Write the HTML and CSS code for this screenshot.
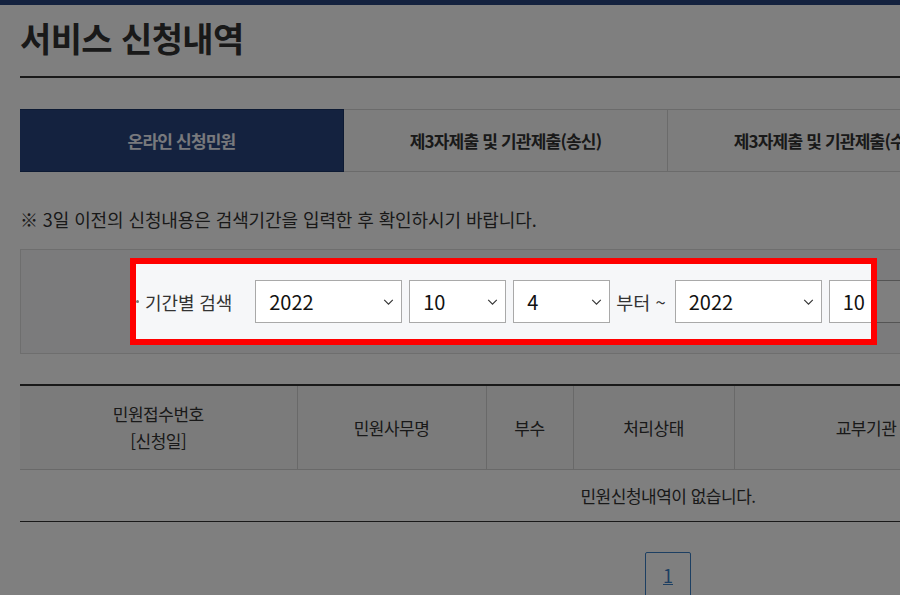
FILE: index.html
```html
<!DOCTYPE html>
<html lang="ko">
<head>
<meta charset="UTF-8">
<title>서비스 신청내역</title>
<link rel="stylesheet" href="styles.css">
</head>
<body>

<div class="topbar"></div>

<div class="wrap">
	<h1 class="title">서비스 신청내역</h1>

	<ul class="tabs">
		<li class="tab on">온라인 신청민원</li>
		<li class="tab">제3자제출 및 기관제출(송신)</li>
		<li class="tab">제3자제출 및 기관제출(수신)</li>
		<li class="tab">기관제출(수신)</li>
	</ul>

	<p class="notice">※ 3일 이전의 신청내용은 검색기간을 입력한 후 확인하시기 바랍니다.</p>

	<div class="search">
		<span class="label"><i class="dot"></i>기간별 검색</span>
		<div class="field">
			<span class="sel wide">2022<svg viewBox="0 0 12 7"><path d="M1 1l5 5 5-5"/></svg></span>
			<span class="sel">10<svg viewBox="0 0 12 7"><path d="M1 1l5 5 5-5"/></svg></span>
			<span class="sel">4<svg viewBox="0 0 12 7"><path d="M1 1l5 5 5-5"/></svg></span>
		</div>
		<span class="txt">부터 ~</span>
		<div class="field">
			<span class="sel wide">2022<svg viewBox="0 0 12 7"><path d="M1 1l5 5 5-5"/></svg></span>
			<span class="sel">10<svg viewBox="0 0 12 7"><path d="M1 1l5 5 5-5"/></svg></span>
			<span class="sel">11<svg viewBox="0 0 12 7"><path d="M1 1l5 5 5-5"/></svg></span>
		</div>
		<span class="txt">까지</span>
		<span class="btn">조회</span>
	</div>

	<table class="list">
		<tr>
			<th class="c1">민원접수번호<br>[신청일]</th>
			<th class="c2">민원사무명</th>
			<th class="c3">부수</th>
			<th class="c4">처리상태</th>
			<th class="c5">교부기관</th>
			<th>열람문서</th>
		</tr>
		<tr>
			<td colspan="6">민원신청내역이 없습니다.</td>
		</tr>
	</table>

	<div class="paging">
		<a class="page" href="#">1</a>
	</div>
</div>

<!-- focus box over the search row -->
<div class="spot"></div>

</body>
</html>
```

FILE: styles.css
```css
html, body {
    margin: 0;
    padding: 0;
}
body {
    background: white;
    font-family: "Noto Sans CJK KR", "Noto Sans", sans-serif;
    color: #333;
    overflow: hidden;
    height: 595px;
    position: relative;
}

.topbar {
    height: 5px;
    background: #28447e;
}
.wrap {
    width: 1296px;
    margin-left: 20px;
}
.title {
    margin: 13px 0 0;
    padding-bottom: 18px;
    border-bottom: 2px solid #333;
    font-size: 34px;
    line-height: 40px;
    font-weight: bold;
    letter-spacing: -0.6px;
}

.tabs {
    list-style: none;
    margin: 31px 0 0;
    padding: 0;
    display: flex;
}
.tab {
    flex: 1;
    height: 61px;
    display: flex;
    align-items: center;
    justify-content: center;
    border: 1px solid #d6d6d6;
    border-left: none;
    background: #fafafa;
    font-size: 17px;
    font-weight: bold;
    letter-spacing: -0.8px;
    color: #333;
}
.tab.on {
    background: #28447e;
    border-color: #1a3466;
    color: #f0f3fa;
}

.notice {
    margin: 35px 0 0;
    font-size: 18px;
    line-height: 24px;
    letter-spacing: -0.1px;
}

.search {
    margin-top: 18px;
    height: 103px;
    border: 1px solid #dcdcdc;
    background: #f6f7f9;
    display: flex;
    align-items: center;
    padding-left: 115px;
    white-space: nowrap;
    font-size: 18px;
}
.label {
    display: flex;
    align-items: center;
    margin-right: 23px;
    letter-spacing: -0.1px;
}
.dot {
    width: 3px;
    height: 3px;
    border-radius: 50%;
    background: #777;
    margin-right: 6px;
}
.field {
    display: flex;
    gap: 7px;
}
.txt {
    margin: 0 9px 0 6px;
    font-size: 18.5px;
}
.sel {
    width: 97px;
    height: 43px;
    box-sizing: border-box;
    border: 1px solid #a9a9a9;
    background: white;
    display: flex;
    align-items: center;
    justify-content: space-between;
    padding: 0 7px 0 13px;
    font-size: 20px;
    color: #111;
}
.sel.wide {
    width: 147px;
}
.sel svg {
    width: 11px;
    height: 6px;
    fill: none;
    stroke: #333;
    stroke-width: 1.3;
}
.btn {
    padding: 8px 24px;
    background: #28447e;
    color: white;
}

.list {
    margin-top: 30px;
    width: 100%;
    border-collapse: collapse;
    border-top: 2px solid #333;
    border-bottom: 1px solid #333;
    font-size: 17px;
    letter-spacing: -0.5px;
}
.list th {
    height: 84px;
    box-sizing: border-box;
    padding: 0;
    background: #f7f7f7;
    font-weight: normal;
    line-height: 27px;
    border-right: 1px solid #d3d3d3;
    border-bottom: 1px solid #d3d3d3;
}
.list th:last-child {
    border-right: none;
}
.c1 { width: 277px; }
.c2 { width: 189px; }
.c3 { width: 87px; }
.c4 { width: 161px; }
.c5 { width: 264px; }
.list td {
    height: 51px;
    padding: 0;
    text-align: center;
}

.paging {
    margin-top: 30px;
    display: flex;
    justify-content: center;
}
.page {
    width: 46px;
    height: 46px;
    box-sizing: border-box;
    border: 1px solid #3b7fc4;
    border-radius: 2px;
    display: flex;
    align-items: center;
    justify-content: center;
    color: #3b7fc4;
    font-size: 18px;
    text-decoration: underline;
}

.spot {
    position: absolute;
    left: 130px;
    top: 258px;
    width: 747px;
    height: 87px;
    box-sizing: border-box;
    border: 6px solid #ff0000;
    box-shadow: 0 0 0 3000px rgba(0, 0, 0, 0.5);
}
```
